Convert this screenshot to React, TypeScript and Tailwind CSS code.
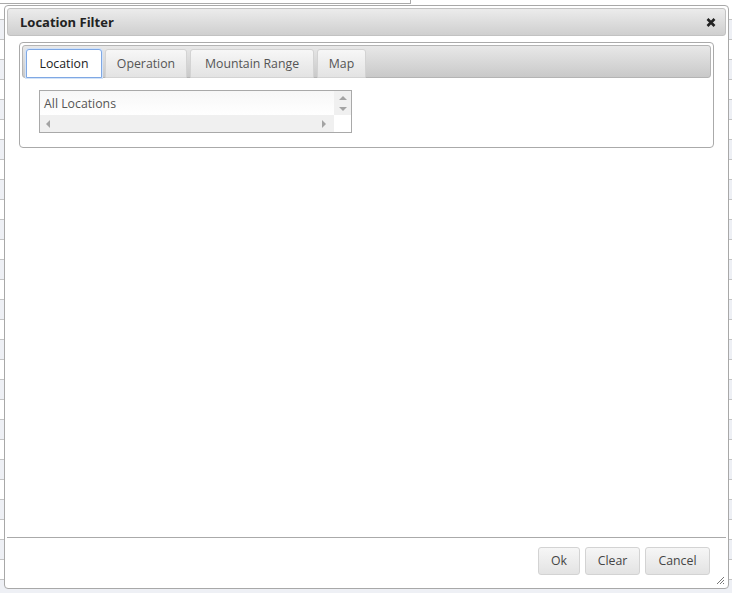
import React, { useState } from 'react';

const tabs = ['Location', 'Operation', 'Mountain Range', 'Map'];
const tabWidths: Record<string, string> = {
	Location: 'w-[76px]',
	Operation: 'w-[82px]',
	'Mountain Range': 'w-[124px]',
	Map: 'w-[49px]',
};

const Triangle = ({ dir }: { dir: 'up' | 'down' | 'left' | 'right' }) => {
	const points = {
		up: '0,5 4,1 8,5',
		down: '0,1 4,5 8,1',
		left: '5,0 1,4 5,8',
		right: '1,0 5,4 1,8',
	}[dir];
	const horiz = dir === 'left' || dir === 'right';
	return (
		<svg width={horiz ? 6 : 8} height={horiz ? 8 : 6} viewBox={horiz ? '0 0 6 8' : '0 0 8 6'}>
			<polygon points={points} fill="#a3a3a3" />
		</svg>
	);
};

const ListBox = () => (
	<div className="w-[313px] h-[43px] border border-[#a9a9a9] bg-white flex">
		<div className="flex-1 flex flex-col">
			<div className="flex-1 bg-linear-to-b from-[#f7f7f7] to-white px-[4px] pt-[5px] text-[12.3px] text-[#555] leading-[16px]">
				All Locations
			</div>
			<div className="h-[17px] bg-[#f0f0f0] flex items-center pl-[5px] pr-[7px] justify-between">
				<Triangle dir="left" />
				<Triangle dir="right" />
			</div>
		</div>
		<div className="w-[17px] flex flex-col">
			<div className="flex-1 bg-[#f0f0f0] flex flex-col items-center pt-[4px] gap-[5px]">
				<Triangle dir="up" />
				<Triangle dir="down" />
			</div>
			<div className="h-[17px] bg-white" />
		</div>
	</div>
);

const Button = ({ label, width }: { label: string; width: string }) => (
	<button
		type="button"
		className={`${width} h-[28px] pt-[1px] rounded-[3px] border border-[#d3d3d3] bg-linear-to-b from-[#f6f6f6] to-[#e3e3e3] text-[12.3px] text-[#454545]`}>
		{label}
	</button>
);

export default function App() {
	const [active, setActive] = useState('Location');
	const rows = Array.from({ length: 30 }, (_, i) => i);

	return (
		<div className="relative w-[732px] h-[593px] overflow-hidden bg-white font-['Open_Sans',sans-serif]">
			{/* page behind the dialog */}
			<div className="flex flex-col">
				{rows.map((i) => (
					<div
						key={i}
						className={`relative h-[20px] border-b border-[#c4c4c4] ${i % 2 === 1 ? 'bg-[#eef0f5]' : 'bg-white'}`}>
						{i === 0 && (
							<div className="absolute left-0 top-0 w-[411px] h-[4px] bg-white border-r border-b border-[#aaa]" />
						)}
					</div>
				))}
			</div>

			{/* dialog */}
			<div className="absolute left-[4px] top-[5px] w-[725px] h-[584px] border border-[#a8a8a8] rounded-[4px] bg-white p-[2px] flex flex-col">
				<div className="h-[28px] border border-[#c2c2c2] rounded-[3px] bg-linear-to-b from-[#ececec] to-[#cfcfcf] flex items-center justify-between pl-[12px] pr-[9px] pt-[1px]">
					<span className="text-[13px] font-bold text-[#222]">Location Filter</span>
					<svg width="10" height="9" viewBox="0 0 10 9">
						<path d="M1.5 1 L8.5 8 M8.5 1 L1.5 8" stroke="#222" strokeWidth="2.6" />
					</svg>
				</div>

				<div className="flex-1 pt-[6px] px-[12px]">
					<div className="h-[106px] border border-[#aaa] rounded-[4px] p-[2px] flex flex-col">
						<div className="h-[33px] border border-[#b4b4b4] rounded-[3px] bg-linear-to-b from-[#e8e8e8] to-[#c9c9c9] flex items-start gap-[3px] pl-[3px] pt-[3px]">
							{tabs.map((t) => (
								<div
									key={t}
									onClick={() => setActive(t)}
									className={`${tabWidths[t]} h-[29px] pt-[1px] rounded-t-[3px] flex items-center justify-center text-[12.3px] cursor-pointer ${
										t === active
											? 'bg-white border border-[#7fa8e4] shadow-[0_0_0_1px_#d3e3f8] text-[#222]'
											: 'bg-linear-to-b from-[#f7f7f7] to-[#e3e3e3] border border-[#d3d3d3] text-[#555]'
									}`}>
									{t}
								</div>
							))}
						</div>
						<div className="pt-[12px] pl-[17px]">
							<ListBox />
						</div>
					</div>
				</div>

				<div className="border-t border-[#aaa] pt-[9px] pb-[11px] pr-[16px] flex justify-end gap-[5px] relative">
					<Button label="Ok" width="w-[42px]" />
					<Button label="Clear" width="w-[55px]" />
					<Button label="Cancel" width="w-[65px]" />
					<svg className="absolute right-[1px] bottom-[1px]" width="10" height="10" viewBox="0 0 10 10">
						<path d="M9 2 L2 9 M9 5 L5 9 M9 8 L8 9" stroke="#777" strokeWidth="1" />
					</svg>
				</div>
			</div>
		</div>
	);
}
